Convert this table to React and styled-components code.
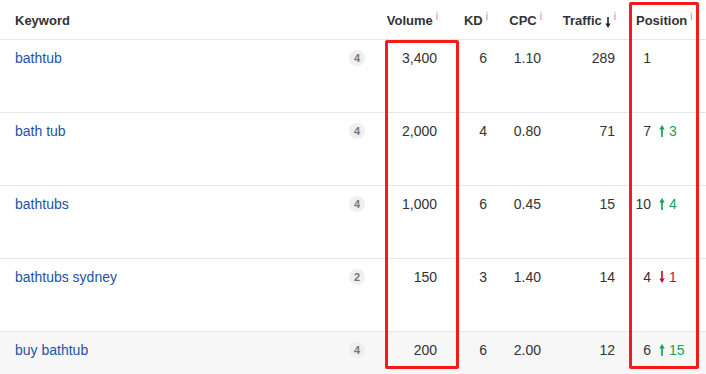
import React from "react";
import styled, { createGlobalStyle } from "styled-components";

const GlobalStyle = createGlobalStyle`
  html, body {
    margin: 0;
    padding: 0;
    background: #fff;
  }
  body {
    font-family: "Liberation Sans", Arial, sans-serif;
    color: #333;
  }
`;

const COLUMNS = "373px 74px 50px 54px 74px 81px";

const Wrapper = styled.div`
  position: relative;
  width: 706px;
  height: 374px;
  overflow: hidden;
`;

const HeaderRow = styled.div`
  display: grid;
  grid-template-columns: ${COLUMNS};
  height: 39px;
  border-bottom: 1px solid #e6e6e6;
  box-sizing: content-box;
`;

const HeadCell = styled.div`
  display: flex;
  align-items: flex-start;
  justify-content: ${(p) => (p.$left ? "flex-start" : "flex-end")};
  padding: 13px ${(p) => (p.$left ? "0" : "9px")} 0 ${(p) => p.$pl || 0}px;
  font-size: 13px;
  line-height: 16px;
  font-weight: bold;
  color: #333;
`;

const Info = styled.span`
  font-size: 10px;
  line-height: 10px;
  font-weight: normal;
  color: #999;
  margin-left: 3px;
  margin-top: -1px;
`;

const SortArrow = styled.svg`
  width: 6px;
  height: 11px;
  margin: 4px 0 0 3px;
`;

const Row = styled.div`
  display: grid;
  grid-template-columns: ${COLUMNS};
  height: 72px;
  border-bottom: 1px solid #e6e6e6;
  box-sizing: content-box;
  background: ${(p) => (p.$shaded ? "#f7f7f7" : "#fff")};
`;

const Cell = styled.div`
  display: flex;
  align-items: flex-start;
  justify-content: flex-end;
  padding: 9px 10px 0 0;
  font-size: 14px;
  line-height: 18px;
  color: #333;
`;

const KeywordCell = styled.div`
  display: flex;
  align-items: flex-start;
  justify-content: space-between;
  padding: 9px 8px 0 15px;
`;

const KeywordLink = styled.a`
  font-size: 14px;
  line-height: 18px;
  color: #1d52a8;
  text-decoration: none;
`;

const Badge = styled.span`
  display: inline-flex;
  align-items: center;
  justify-content: center;
  width: 16px;
  height: 16px;
  margin-top: 1px;
  border-radius: 50%;
  background: #efefef;
  color: #777;
  font-size: 11px;
  font-weight: bold;
`;

const PositionCell = styled.div`
  display: flex;
  align-items: flex-start;
  padding: 9px 0 0 9px;
  font-size: 14px;
  line-height: 18px;
`;

const PosNum = styled.span`
  display: inline-block;
  width: 17px;
  text-align: right;
  color: #333;
`;

const Change = styled.span`
  display: inline-flex;
  align-items: center;
  margin-left: 8px;
  color: ${(p) => (p.$up ? "#17a05b" : "#c8102e")};
`;

const ArrowSvg = styled.svg`
  width: 6px;
  height: 12px;
  margin-right: 4px;
`;

const Highlight = styled.div`
  position: absolute;
  border: 3px solid #f51b1b;
  border-radius: 2px;
  box-sizing: border-box;
`;

const Arrow = ({ up }) => (
  <ArrowSvg viewBox="0 0 6 12">
    {up ? (
      <>
        <path d="M3 3 V12" stroke="currentColor" strokeWidth="1.7" />
        <path d="M0.3 4.5 L3 0 L5.7 4.5 Z" fill="currentColor" />
      </>
    ) : (
      <>
        <path d="M3 0 V9" stroke="currentColor" strokeWidth="1.7" />
        <path d="M0.3 7.5 L3 12 L5.7 7.5 Z" fill="currentColor" />
      </>
    )}
  </ArrowSvg>
);

const rows = [
  { kw: "bathtub", badge: 4, volume: "3,400", kd: 6, cpc: "1.10", traffic: 289, pos: 1 },
  { kw: "bath tub", badge: 4, volume: "2,000", kd: 4, cpc: "0.80", traffic: 71, pos: 7, change: 3, up: true },
  { kw: "bathtubs", badge: 4, volume: "1,000", kd: 6, cpc: "0.45", traffic: 15, pos: 10, change: 4, up: true },
  { kw: "bathtubs sydney", badge: 2, volume: "150", kd: 3, cpc: "1.40", traffic: 14, pos: 4, change: 1, up: false },
  { kw: "buy bathtub", badge: 4, volume: "200", kd: 6, cpc: "2.00", traffic: 12, pos: 6, change: 15, up: true, shaded: true },
];

export default function App() {
  return (
    <Wrapper>
      <GlobalStyle />
      <HeaderRow>
        <HeadCell $left $pl={15}>Keyword</HeadCell>
        <HeadCell>Volume<Info>i</Info></HeadCell>
        <HeadCell>KD<Info>i</Info></HeadCell>
        <HeadCell>CPC<Info>i</Info></HeadCell>
        <HeadCell>
          Traffic
          <SortArrow viewBox="0 0 6 11">
            <path d="M3 0 V8" stroke="#222" strokeWidth="1.6" />
            <path d="M0.4 6.5 L3 11 L5.6 6.5 Z" fill="#222" />
          </SortArrow>
          <Info>i</Info>
        </HeadCell>
        <HeadCell $left $pl={11}>Position<Info>i</Info></HeadCell>
      </HeaderRow>
      {rows.map((r) => (
        <Row key={r.kw} $shaded={r.shaded}>
          <KeywordCell>
            <KeywordLink href="#">{r.kw}</KeywordLink>
            <Badge>{r.badge}</Badge>
          </KeywordCell>
          <Cell>{r.volume}</Cell>
          <Cell>{r.kd}</Cell>
          <Cell>{r.cpc}</Cell>
          <Cell>{r.traffic}</Cell>
          <PositionCell>
            <PosNum>{r.pos}</PosNum>
            {r.change != null && (
              <Change $up={r.up}>
                <Arrow up={r.up} />
                {r.change}
              </Change>
            )}
          </PositionCell>
        </Row>
      ))}
      <Highlight style={{ left: 385, top: 40, width: 74, height: 329 }} />
      <Highlight style={{ left: 629, top: 2, width: 70, height: 367 }} />
    </Wrapper>
  );
}
